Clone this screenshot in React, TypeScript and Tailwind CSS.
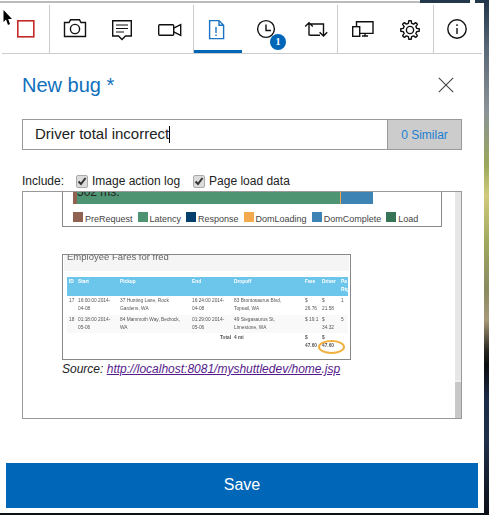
import React from "react";

const gearPath = (() => {
  const cx = 24, cy = 25, teeth = 8, ro = 9.3, ri = 6.9;
  const pts: string[] = [];
  for (let i = 0; i < teeth; i++) {
    const a = (i * 2 * Math.PI) / teeth - Math.PI / 2;
    const s = (2 * Math.PI) / teeth;
    const steps = [[-0.3, ri], [-0.17, ro], [0.17, ro], [0.3, ri]] as const;
    for (const [f, r] of steps) {
      pts.push(`${(cx + r * Math.cos(a + f * s)).toFixed(2)} ${(cy + r * Math.sin(a + f * s)).toFixed(2)}`);
    }
  }
  return "M" + pts.join("L") + "Z";
})();

function Tab({ sep, active, badge, children }: { sep?: boolean; active?: boolean; badge?: string; children: React.ReactNode }) {
  return (
    <div className={`relative w-12 h-12 shrink-0 ${sep ? "border-r border-[#cccccc]" : ""}`}>
      <svg width="48" height="45" viewBox="0 0 48 45" fill="none" stroke="#111111" strokeWidth="1.4">
        {children}
      </svg>
      {active && <div className="h-[3px] bg-[#0066b8]" />}
      {badge && (
        <span className="absolute left-[28px] top-[29px] w-4 h-4 rounded-full bg-[#0066b8] text-white text-[10px] leading-4 text-center font-bold font-['Liberation_Serif',serif]">
          {badge}
        </span>
      )}
    </div>
  );
}

function Check({ label }: { label: string }) {
  return (
    <span className="flex items-center">
      <span className="w-[12px] h-[13px] rounded-[2px] bg-[#dcdcdc] border border-[#aaaaaa] flex items-center justify-center">
        <svg width="10" height="10" viewBox="0 0 10 10" fill="none" stroke="#333333" strokeWidth="2">
          <path d="M1.5 5.5 L4 8 L8.5 2" />
        </svg>
      </span>
      <span className="ml-[4px]">{label}</span>
    </span>
  );
}

const legend = [
  ["PreRequest", "bg-[#8f6251]"],
  ["Latency", "bg-[#4f9472]"],
  ["Response", "bg-[#05406c]"],
  ["DomLoading", "bg-[#f4a94e]"],
  ["DomComplete", "bg-[#3d84b5]"],
  ["Load", "bg-[#387457]"],
];

const gridCols = "grid grid-cols-[9px_42px_72px_42px_71px_17px_19px_7px] pl-[2px]";

export default function App() {
  return (
    <div className="relative w-[489px] h-[515px] overflow-hidden bg-[linear-gradient(180deg,#22344a_0px,#5a6a78_50px,#8a9298_110px,#9aa85a_165px,#d2ca7c_195px,#a2aa60_240px,#8a8a60_290px,#a89a78_320px,#2a2820_350px,#0c0e10_365px,#1c2c48_400px,#20304a_440px,#0c1018_515px)] font-['Liberation_Sans',Arial,sans-serif]">
      <div className="flex h-[3px]">
        <div className="w-[420px] border-t border-white bg-[#bbbbbb]" />
        <div className="w-[50px] bg-[#24384c]" />
        <div className="w-[5px] bg-white" />
        <div className="w-[9px] bg-[#24384c]" />
      </div>
      <div className="w-[484px] h-[510px] bg-white flex flex-col">
        <div className="flex ml-[2px] w-[480px] h-[49px] mt-[2px] border-b border-[#cccccc]">
          <Tab sep>
            <rect x="15.8" y="15.8" width="16" height="16" stroke="#c62828" strokeWidth="1.6" fill="#fff" />
          </Tab>
          <Tab>
            <path d="M14.5 17.5 H19 L20.5 14.8 H29.5 L31 17.5 H35.5 V31.5 H14.5 Z" />
            <circle cx="25" cy="24" r="4.6" />
          </Tab>
          <Tab>
            <path d="M14.7 15.7 H33.3 V31 H27.5 L24 34.5 L20.5 31 H14.7 Z" />
            <path d="M18 20 H30 M18 23.5 H30 M18 27 H26" strokeWidth="1.1" />
          </Tab>
          <Tab sep>
            <rect x="12.7" y="19.7" width="15" height="10.6" rx="1" />
            <path d="M27.7 23.2 L34.7 19.7 V30.3 L27.7 26.8" />
          </Tab>
          <Tab active>
            <path d="M15.6 15.6 H25 L29.6 20.2 V33.6 H15.6 Z M25 15.6 V20.2 H29.6" stroke="#1a73c4" />
            <path d="M22 22 V28 M22 29.5 V31" stroke="#1a73c4" />
          </Tab>
          <Tab badge="1">
            <circle cx="24" cy="24" r="8.4" />
            <path d="M24 19.5 V25.5 H29" />
          </Tab>
          <Tab sep>
            <path d="M19 30.6 V18.2 M15.2 21.6 L19 17.8 L22.8 21.6 M19.5 19 H33.5 V30.6 M29.6 27.2 L33.5 31 L37.2 27.2 M19.5 30.2 H30" />
          </Tab>
          <Tab>
            <path d="M18.5 21.5 V16.7 H35 V28.4 H21.8 M24 31 H30 M27 28.4 V31" />
            <rect x="14.7" y="21.7" width="7" height="9.6" />
          </Tab>
          <Tab sep>
            <path d={gearPath} strokeLinejoin="round" />
            <circle cx="24" cy="25" r="3.6" />
          </Tab>
          <Tab>
            <circle cx="23" cy="24" r="9.2" />
            <path d="M23 23 V29 M23 19.2 V21" />
          </Tab>
        </div>

        <div className="flex items-center justify-between h-[28px] mt-[17px] ml-[22px] mr-[30px]">
          <h1 className="text-[20px] leading-[28px] text-[#1070bd]">New bug *</h1>
          <svg width="16" height="16" viewBox="0 0 16 16" fill="none" stroke="#444444" strokeWidth="1.1">
            <path d="M0.8 0.8 L15.2 15.2 M15.2 0.8 L0.8 15.2" />
          </svg>
        </div>

        <div className="flex h-[31px] mt-[20px] mx-[22px] w-[440px] border border-[#999999]">
          <div className="flex-1 flex items-center pl-[12px] text-[15px] text-[#222222]">
            Driver total incorrect
            <span className="w-px h-[17px] bg-black" />
          </div>
          <div className="w-[74px] bg-[#cccccc] border-l border-[#999999] flex items-center justify-center text-[12px] text-[#1a7fd0]">
            0 Similar
          </div>
        </div>

        <div className="flex items-center h-[14px] mt-[24px] ml-[22px] text-[12px] text-[#222222]">
          <span className="w-[54px]">Include:</span>
          <Check label="Image action log" />
          <span className="w-[13px]" />
          <Check label="Page load data" />
        </div>

        <div className="flex w-[440px] h-[228px] mt-[3px] ml-[22px] border border-[#999999]">
          <div className="flex-1 overflow-hidden">
            <div className="relative ml-[39px] w-[380px] h-[35px] border border-t-0 border-[#8a8a8a] px-[10px]">
              <div className="relative flex h-[12px] w-[300px]">
                <div className="w-[4px] bg-[#8f6251]" />
                <div className="w-[263px] bg-[#4f9472]" />
                <div className="w-px bg-[#f4a94e]" />
                <div className="w-[32px] bg-[#3d84b5]" />
                <span className="absolute left-[4px] top-[-7px] text-[12px] leading-[14px] text-[#222222]">502 ms.</span>
              </div>
              <div className="flex gap-[5px] mt-[8px] text-[9px] leading-[10px] text-[#444444]">
                {legend.map(([name, color]) => (
                  <span key={name} className="flex items-start gap-[2px]">
                    <span className={`w-[10px] h-[10px] ${color}`} />
                    <span className="mt-[2px]">{name}</span>
                  </span>
                ))}
              </div>
            </div>

            <div className="relative ml-[39px] mt-[27px] w-[289px] h-[106px] border border-[#888888] overflow-hidden text-[#555555] blur-[0.35px]">
              <div className="ml-[1px] mr-[1px] h-[16px] bg-[#f5f5f5] pl-[3px] text-[9.5px] leading-[8px] text-[#666666] overflow-hidden">
                <span className="block mt-[-2px]">Employee Fares for fred</span>
              </div>
              <div className="ml-[4px] mr-[2px] mt-[6px] text-[4.8px] leading-[8px]">
                <div className={`${gridCols} bg-[#6cc5ea] h-[19px] pt-[1px] font-bold text-white`}>
                  <span>ID</span><span>Start</span><span>Pickup</span><span>End</span><span>Dropoff</span><span>Fare</span><span>Driver</span><span>Pa Rtg</span>
                </div>
                <div className={`${gridCols} h-[19px] pt-[1px]`}>
                  <span>17</span><span>16:00:00 2014-<br />04-08</span><span className="pr-[8px]">37 Hunting Lane, Rock Gardens, WA</span><span>16:24:00 2014-<br />04-08</span><span className="pr-[8px]">83 Brontosaurus Blvd, Topsail, WA</span><span>$<br />26.76</span><span>$<br />21.58</span><span>1</span>
                </div>
                <div className={`${gridCols} h-[18px] pt-[1px] bg-[#f9f9f9]`}>
                  <span>18</span><span>01:18:00 2014-<br />05-06</span><span className="pr-[8px]">84 Mammoth Way, Bedrock, WA</span><span>01:29:00 2014-<br />05-06</span><span className="pr-[8px]">49 Stegasaurus St, Limestone, WA</span><span>$ 19.1</span><span>$<br />34.32</span><span>5</span>
                </div>
                <div className={`${gridCols} h-[20px] pt-[1px] font-bold`}>
                  <span /><span /><span /><span className="text-right pr-[3px]">Total</span><span>4 mi</span><span>$<br />47.60</span><span>$<br />47.60</span><span />
                </div>
              </div>
              <div className="absolute left-[255px] top-[85px] w-[27px] h-[14px] rounded-[50%] border-2 border-[#f0b040]" />
            </div>

            <p className="ml-[39px] mt-[2px] text-[12px] leading-[14px] italic text-[#222222]">
              Source: <a href="#" className="underline text-[#551a8b]">http://localhost:8081/myshuttledev/home.jsp</a>
            </p>
          </div>
          <div className="w-[6px] flex flex-col bg-[#e6e6e6]">
            <div className="h-[188px]" />
            <div className="h-[2px] bg-[#eeeeee]" />
            <div className="flex-1 bg-[#c8c8c8]" />
          </div>
        </div>

        <button className="w-[472px] h-[45px] mt-[44px] ml-[6px] pb-[2px] bg-[#0066b8] text-white text-[16px]">Save</button>
      </div>

      <svg className="absolute left-[3px] top-[10px]" width="10" height="16" viewBox="0 0 10 16" fill="#000000">
        <path d="M0.5 0 V12 L3 9.5 L5 15 L7 14 L5.2 9 H9 Z" />
      </svg>
    </div>
  );
}
